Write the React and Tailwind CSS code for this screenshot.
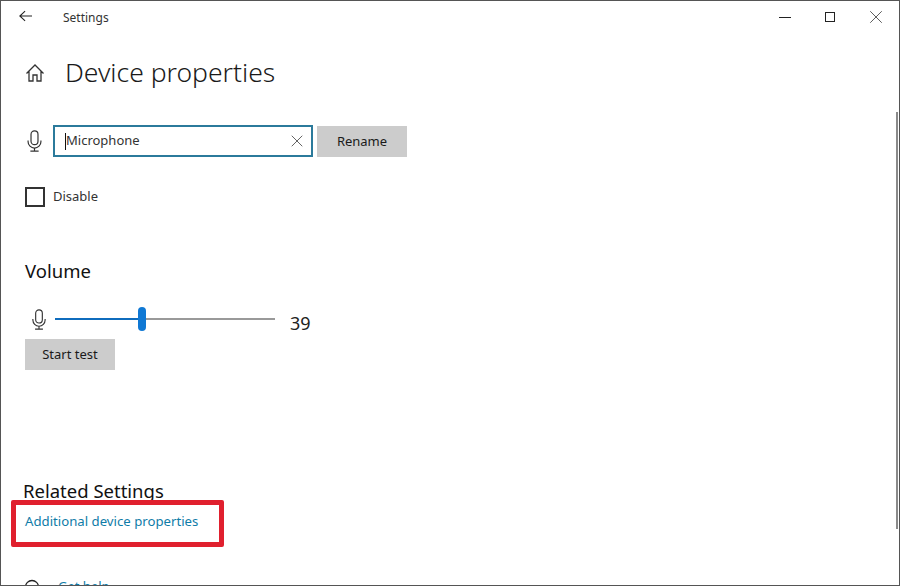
import { X } from 'lucide-react'

function MicIcon({ className }) {
  return (
    <svg viewBox="0 0 16 24" fill="none" stroke="#333" strokeWidth="1.3" className={className}>
      <rect x="4.2" y="1" width="7.6" height="15" rx="3.8" />
      <path d="M1 11.5v1.2a7 7 0 0 0 14 0v-1.2" />
      <path d="M8 19.7V23M3.5 23h9" />
    </svg>
  )
}

function GrayButton({ children, className }) {
  return (
    <button className={`bg-[#cccccc] text-[13px] text-[#1a1a1a] ${className}`}>{children}</button>
  )
}

export default function App() {
  return (
    <div className="relative w-[900px] h-[586px] overflow-hidden bg-white border border-[#555555] font-['Noto_Sans',sans-serif] text-[#111111]">
      {/* Title bar */}
      <div className="flex items-center h-[32px]">
        <svg viewBox="0 0 16 14" fill="none" stroke="#222" strokeWidth="1.3" className="ml-[18px] w-[13px] h-[12px] mb-[3px]">
          <path d="M1 7h15M7.5 1 1 7l6.5 6" />
        </svg>
        <span className="ml-[31px] text-[12px] text-[#333333] mt-[1px]">Settings</span>
        <div className="ml-auto flex items-center">
          <div className="w-[12px] h-[1px] bg-[#222222]" />
          <div className="ml-[34px] w-[10px] h-[10px] border border-[#222222]" />
          <X className="ml-[30px] mr-[12px] w-[22px] h-[22px] text-[#222222]" strokeWidth={0.8} />
        </div>
      </div>

      {/* Heading */}
      <div className="flex items-center mt-[20px] h-[40px]">
        <svg viewBox="0 0 20 20" fill="none" stroke="#333" strokeWidth="1.3" className="ml-[24px] w-[20px] h-[20px]">
          <path d="M1.5 10.5 10 2l8.5 8.5M4 8.5V18h4v-6h4v6h4V8.5" />
        </svg>
        <h1 className="ml-[20px] text-[26.5px] text-[#1a1a1a] font-light">Device properties</h1>
      </div>

      {/* Rename */}
      <div className="flex items-center mt-[32px]">
        <MicIcon className="ml-[26px] w-[15px] h-[22px]" />
        <div className="ml-[11px] flex items-center w-[260px] h-[32px] border-2 border-[#2b7a9b] pl-[10px] pr-[4px]">
          <span className="w-[1px] h-[17px] bg-[#111111]" />
          <span className="text-[13px] text-[#333333]">Microphone</span>
          <X className="ml-auto w-[20px] h-[20px] text-[#444444]" strokeWidth={1} />
        </div>
        <GrayButton className="ml-[4px] w-[90px] h-[31px] mt-[1px] pt-[1px]">Rename</GrayButton>
      </div>

      {/* Disable */}
      <label className="flex items-center mt-[30px]">
        <span className="ml-[24px] w-[20px] h-[20px] border-2 border-[#333333]" />
        <span className="ml-[8px] text-[13px] text-[#333333]">Disable</span>
      </label>

      {/* Volume */}
      <h2 className="ml-[24px] mt-[50px] text-[18.5px] leading-[28px]">Volume</h2>
      <div className="flex items-center mt-[24px] h-[28px]">
        <MicIcon className="ml-[31px] w-[14px] h-[21px] mb-[8px]" />
        <div className="ml-[9px] flex items-center w-[220px] h-[24px] mb-[8px]">
          <div className="w-[83px] h-[2px] bg-[#0f6cbd]" />
          <div className="w-[8px] h-[24px] rounded-full bg-[#0f78d4]" />
          <div className="flex-1 h-[2px] bg-[#999999]" />
        </div>
        <span className="ml-[15px] text-[18px] text-[#222222]">39</span>
      </div>
      <GrayButton className="ml-[24px] mt-[2px] w-[90px] h-[31px] pt-[1px] block">Start test</GrayButton>

      {/* Related */}
      <h2 className="ml-[22px] mt-[107px] text-[18.5px] leading-[28px]">Related Settings</h2>
      <a className="block ml-[24px] mt-[7px] text-[13.2px] text-[#0f7ca8]">Additional device properties</a>

      {/* Get help, cut off by the window edge */}
      <div className="flex items-center mt-[45px]">
        <svg viewBox="0 0 16 16" fill="none" stroke="#222" strokeWidth="1.3" className="ml-[23px] w-[16px] h-[16px]">
          <circle cx="8" cy="8" r="6.5" />
        </svg>
        <a className="ml-[18px] text-[13px] text-[#0f7ca8]">Get help</a>
      </div>

      {/* Scrollbar */}
      <div className="absolute right-[1px] top-[111px] w-[2px] h-[417px] bg-[#8a8a8a]" />

      {/* Red annotation */}
      <div className="absolute left-[10px] top-[499px] w-[213px] h-[47px] border-[5px] border-[#e0202e] rounded-[2px]" />
    </div>
  )
}
